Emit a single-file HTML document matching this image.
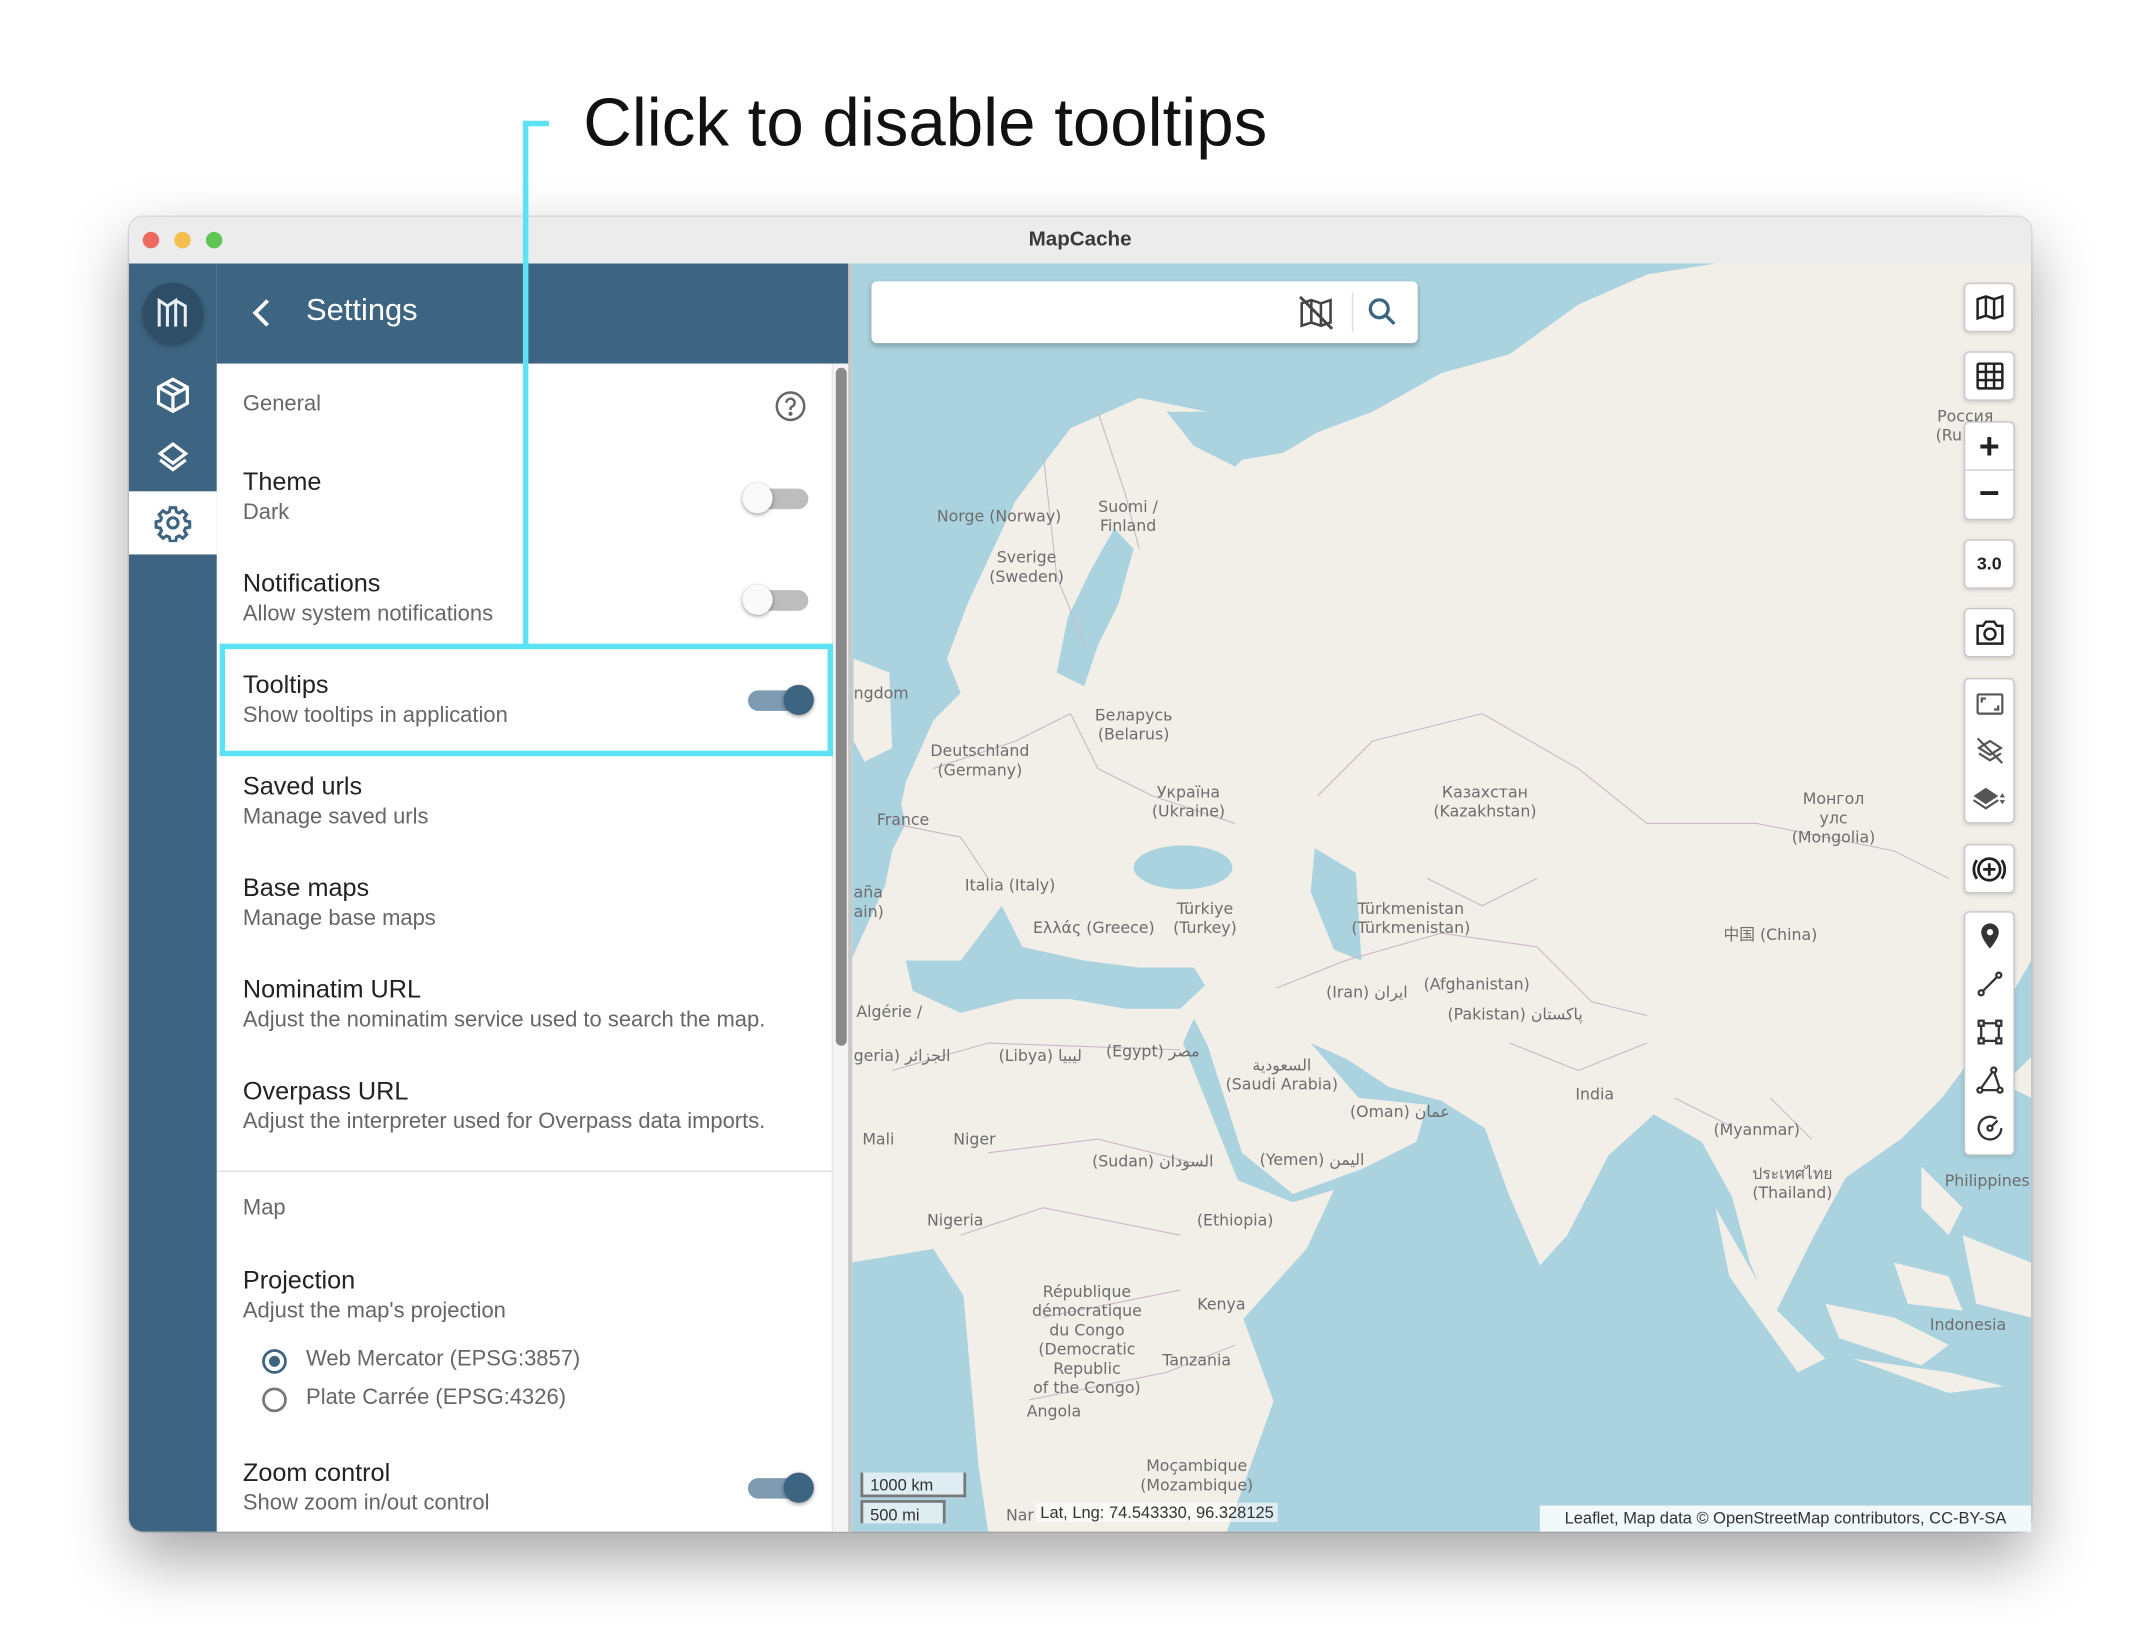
<!DOCTYPE html>
<html><head><meta charset="utf-8">
<style>
html,body{margin:0;padding:0;background:#fff;}
body{width:2152px;height:1630px;overflow:hidden;position:relative;font-family:"Liberation Sans",Arial,sans-serif;}
#s{position:absolute;left:0;top:0;width:1568px;height:1188px;transform:scale(1.3724);transform-origin:0 0;}
.a{position:absolute;}
.t1{position:absolute;left:177px;font-size:18.4px;color:#222;}
.t2{position:absolute;left:177px;font-size:16px;color:#666;}
.tg{position:absolute;width:44px;height:15px;border-radius:8px;background:#bdbdbd;}
.tg i{position:absolute;top:-4px;width:22px;height:22px;border-radius:50%;background:#fafafa;box-shadow:0 1px 3px rgba(0,0,0,.4);left:-4px;}
.tg.on{background:#7f9bb1;}
.tg.on i{left:26px;background:#3d6480;}
.btn{position:absolute;left:1431px;width:35px;background:#fff;border:1px solid #c8c8c8;border-radius:4px;box-shadow:0 1px 3px rgba(0,0,0,.15);}
</style></head><body>
<div id="s">
<div class="a" style="left:425px;top:60px;font-size:49px;color:#111;line-height:60px;">Click to disable tooltips</div>

<div class="a" style="left:94px;top:158px;width:1386px;height:958px;border-radius:10px;box-shadow:0 20px 45px rgba(0,0,0,.35),0 0 0 1px rgba(0,0,0,.12);overflow:hidden;background:#fff;">
  <div class="a" style="left:0;top:0;width:1386px;height:34px;background:#ececec;border-bottom:1px solid #d6d6d6;"></div>
  <div class="a" style="left:10px;top:11px;width:12px;height:12px;border-radius:50%;background:#ed6a5e;"></div>
  <div class="a" style="left:33px;top:11px;width:12px;height:12px;border-radius:50%;background:#f5bf4f;"></div>
  <div class="a" style="left:56px;top:11px;width:12px;height:12px;border-radius:50%;background:#61c554;"></div>
  <div class="a" style="left:0;top:8px;width:1386px;text-align:center;font-size:15px;font-weight:bold;color:#3a3a3a;">MapCache</div>
</div>

<svg class="a" style="left:620px;top:192px;" width="860" height="924" viewBox="620 192 860 924">
<rect x="620" y="192" width="860" height="924" fill="#aad3df"/>
<path fill="#f2efe9" d="M620,700 L645,645 L660,570 L680,525 L700,505 L690,480 L705,440 L740,365 L780,312 L830,290 L880,300 L905,335 L935,330 L960,315 L1000,300 L1050,272 L1100,258 L1150,222 L1200,200 L1250,192 L1480,192 L1480,700 L1445,760 L1415,800 L1385,830 L1345,858 L1322,900 L1292,960 L1275,920 L1262,872 L1240,832 L1205,812 L1172,842 L1142,900 L1122,922 L1100,872 L1082,822 L1050,802 L1012,792 L982,772 L955,760 L990,800 L1040,805 L1032,832 L992,852 L942,870 L905,840 L880,762 L870,742 L862,760 L902,860 L942,876 L972,867 L952,910 L906,961 L928,1021 L894,1116 L720,1116 L713,1068 L702,944 L680,910 L620,920 Z"/>
<path fill="#aad3df" d="M770,490 L778,450 L795,415 L812,385 L826,400 L815,440 L800,470 L790,500 Z"/>
<path fill="#aad3df" d="M660,700 L700,700 L730,660 L745,690 L790,700 L830,705 L870,705 L878,718 L860,735 L820,735 L780,728 L740,728 L700,738 L665,722 Z"/>
<ellipse cx="862" cy="632" rx="36" ry="16" fill="#aad3df"/>
<path fill="#aad3df" d="M958,618 L988,636 L992,700 L972,692 L955,650 Z"/>
<path fill="#aad3df" d="M620,560 L650,560 L660,600 L640,640 L620,640 Z"/>
<path fill="#f2efe9" d="M622,480 L648,490 L650,545 L630,555 L622,540 Z"/>
<path fill="#aad3df" d="M850,300 L900,300 L920,320 L900,340 L870,325 Z"/>
<path fill="#f2efe9" d="M1250,880 L1290,950 L1330,990 L1310,1000 L1260,930 Z M1330,950 L1380,960 L1420,980 L1400,995 L1340,975 Z M1350,990 L1420,1000 L1460,1010 L1420,1015 Z M1400,850 L1430,880 L1420,900 L1400,880 Z M1380,920 L1420,930 L1430,955 L1390,950 Z M1430,900 L1480,920 L1480,960 L1440,950 Z M1460,790 L1480,770 L1480,800 Z"/>
<g fill="none" stroke="#c9b8c8" stroke-width="0.8">
<path d="M760,330 L770,420 L790,470 M800,300 L820,360 L830,400 M680,560 L740,540 L780,520 L800,560 L840,580 L900,600 M650,600 L700,610 L720,640 M930,720 L980,700 L1050,680 L1120,690 L1160,730 L1200,740 M960,580 L1000,540 L1080,520 L1150,560 L1200,600 L1280,600 L1380,620 L1420,640 M1040,640 L1080,660 L1120,640 M1100,760 L1150,780 L1200,760 M650,780 L720,760 L860,765 M720,840 L800,830 L880,850 M700,900 L760,880 L860,900 M760,960 L860,940 M750,1020 L850,1000 L900,980 M1290,800 L1320,830 M1220,800 L1260,820"/>
</g>
<g font-family="DejaVu Sans,Liberation Sans,sans-serif" font-size="11.5" fill="#6d6d6d" text-anchor="middle">
<text x="728" y="380">Norge (Norway)</text>
<text x="822" y="373">Suomi /</text><text x="822" y="387">Finland</text>
<text x="748" y="410">Sverige</text><text x="748" y="424">(Sweden)</text>
<text x="622" y="509" text-anchor="start">ngdom</text>
<text x="826" y="525">Беларусь</text><text x="826" y="539">(Belarus)</text>
<text x="714" y="551">Deutschland</text><text x="714" y="565">(Germany)</text>
<text x="866" y="581">Україна</text><text x="866" y="595">(Ukraine)</text>
<text x="658" y="601">France</text>
<text x="1082" y="581">Казахстан</text><text x="1082" y="595">(Kazakhstan)</text>
<text x="1336" y="586">Монгол</text><text x="1336" y="600">улс</text><text x="1336" y="614">(Mongolia)</text>
<text x="736" y="649">Italia (Italy)</text>
<text x="878" y="666">Türkiye</text><text x="878" y="680">(Turkey)</text>
<text x="797" y="680">Ελλάς (Greece)</text>
<text x="1028" y="666">Türkmenistan</text><text x="1028" y="680">(Türkmenistan)</text>
<text x="622" y="654" text-anchor="start">aña</text><text x="622" y="668" text-anchor="start">ain)</text>
<text x="1290" y="685">中国 (China)</text>
<text x="1076" y="721">(Afghanistan)</text>
<text x="996" y="727">(Iran) ايران</text>
<text x="1104" y="743">(Pakistan) پاکستان</text>
<text x="624" y="741" text-anchor="start">Algérie /</text>
<text x="622" y="773" text-anchor="start">geria) الجزائر</text>
<text x="758" y="773">(Libya) ليبيا</text>
<text x="840" y="770">(Egypt) مصر</text>
<text x="934" y="780">السعودية</text><text x="934" y="794">(Saudi Arabia)</text>
<text x="1162" y="801">India</text>
<text x="1020" y="814">(Oman) عمان</text>
<text x="1280" y="827">(Myanmar)</text>
<text x="640" y="834">Mali</text>
<text x="710" y="834">Niger</text>
<text x="840" y="850">(Sudan) السودان</text>
<text x="956" y="849">(Yemen) اليمن</text>
<text x="1448" y="864">Philippines</text>
<text x="1306" y="859">ประเทศไทย</text><text x="1306" y="873">(Thailand)</text>
<text x="696" y="893">Nigeria</text>
<text x="900" y="893">(Ethiopia)</text>
<text x="792" y="945">République</text><text x="792" y="959">démocratique</text><text x="792" y="973">du Congo</text><text x="792" y="987">(Democratic</text><text x="792" y="1001">Republic</text><text x="792" y="1015">of the Congo)</text>
<text x="890" y="954">Kenya</text>
<text x="872" y="995">Tanzania</text>
<text x="1434" y="969">Indonesia</text>
<text x="768" y="1032">Angola</text>
<text x="872" y="1072">Moçambique</text><text x="872" y="1086">(Mozambique)</text>
<text x="1432" y="307">Россия</text><text x="1420" y="321">(Ru</text>
<text x="733" y="1108" text-anchor="start">Nar</text>
</g>
</svg>

<div class="a" style="left:627px;top:1073px;border:2px solid #777;border-top:none;background:rgba(255,255,255,.6);font-size:12px;color:#333;padding-left:5px;line-height:18px;box-sizing:border-box;width:77px;height:18px;">1000 km</div>
<div class="a" style="left:627px;top:1093px;width:62px;height:17px;border:2px solid #777;border-bottom:none;background:rgba(255,255,255,.6);font-size:12px;color:#333;padding-left:5px;line-height:18px;box-sizing:border-box;">500 mi</div>
<div class="a" style="left:755px;top:1095px;font-size:12px;color:#333;background:rgba(255,255,255,.6);padding:0 3px;">Lat, Lng: 74.543330, 96.328125</div>
<div class="a" style="left:1122px;top:1097px;width:358px;height:19px;background:rgba(255,255,255,.85);font-size:12px;color:#333;line-height:19px;text-align:center;">Leaflet, Map data © OpenStreetMap contributors, CC-BY-SA</div>

<div class="a" style="left:635px;top:205px;width:398px;height:45px;background:#fff;border-radius:4px;box-shadow:0 2px 4px rgba(0,0,0,.25);"></div>
<svg class="a" style="left:945px;top:214px" width="28" height="28" viewBox="0 0 24 24" fill="none" stroke="#444" stroke-width="1.6"><path d="M3 6l6-2 6 2 6-2v14l-6 2-6-2-6 2z M9 4v14 M15 6v14"/><path d="M2 2l20 20" stroke-width="1.8"/></svg>
<div class="a" style="left:985px;top:213px;width:1px;height:29px;background:#ddd;"></div>
<svg class="a" style="left:995px;top:215px" width="24" height="24" viewBox="0 0 24 24" fill="none" stroke="#3d6480" stroke-width="2.4"><circle cx="10" cy="10" r="6.5"/><path d="M15 15l6 6"/></svg>

<div class="btn" style="top:206px;height:34px;"><svg style="position:absolute;left:6px;top:5px" width="24" height="24" viewBox="0 0 24 24" fill="none" stroke="#222" stroke-width="1.8"><path d="M3 6l6-2 6 2 6-2v14l-6 2-6-2-6 2z M9 4v14 M15 6v14"/></svg></div>
<div class="btn" style="top:256px;height:34px;"><svg style="position:absolute;left:6px;top:5px" width="24" height="24" viewBox="0 0 24 24" fill="none" stroke="#222" stroke-width="1.8"><rect x="3" y="3" width="18" height="18" rx="1"/><path d="M3 9h18M3 15h18M9 3v18M15 3v18"/></svg></div>
<div class="btn" style="top:307px;height:70px;"><div style="position:absolute;left:0;top:34px;width:35px;height:1px;background:#ccc"></div><div style="position:absolute;left:0;top:0;width:35px;text-align:center;font-size:26px;line-height:34px;font-weight:bold;color:#222">+</div><div style="position:absolute;left:0;top:35px;width:35px;text-align:center;font-size:26px;line-height:32px;font-weight:bold;color:#222">−</div></div>
<div class="btn" style="top:393px;height:34px;text-align:center;font-size:13px;font-weight:bold;line-height:34px;color:#222">3.0</div>
<div class="btn" style="top:443px;height:34px;"><svg style="position:absolute;left:6px;top:5px" width="24" height="24" viewBox="0 0 24 24" fill="none" stroke="#222" stroke-width="1.8"><path d="M3 7h4l2-3h6l2 3h4v13H3z"/><circle cx="12" cy="13" r="4"/></svg></div>
<div class="btn" style="top:494px;height:104px;">
<svg style="position:absolute;left:6px;top:6px" width="24" height="24" viewBox="0 0 24 24" fill="none" stroke="#555" stroke-width="1.6"><rect x="3" y="5" width="18" height="14" rx="1"/><path d="M6 11V8h3M18 13v3h-3"/></svg>
<svg style="position:absolute;left:6px;top:40px" width="24" height="24" viewBox="0 0 24 24" fill="none" stroke="#555" stroke-width="1.6"><path d="M4 10l8-5 8 5-8 5z M4 14l8 5 8-5 M3 3l18 18"/></svg>
<svg style="position:absolute;left:4px;top:75px" width="28" height="24" viewBox="0 0 28 24" fill="#555"><path d="M2 10l9-6 9 6-9 6z"/><path d="M2 13l9 6 9-6" fill="none" stroke="#555" stroke-width="1.6"/><path d="M23 8l2 3h-4zM23 16l2-3h-4z"/></svg>
</div>
<div class="btn" style="top:615px;height:34px;"><svg style="position:absolute;left:4px;top:4px" width="27" height="27" viewBox="0 0 24 24" fill="none" stroke="#222" stroke-width="1.8"><circle cx="12" cy="12" r="7"/><path d="M12 8v8M8 12h8M4 6a10 10 0 0 0 0 12M20 6a10 10 0 0 1 0 12"/></svg></div>
<div class="btn" style="top:664px;height:176px;">
<svg style="position:absolute;left:7px;top:6px" width="22" height="22" viewBox="0 0 24 24" fill="#333"><path d="M12 2a7 7 0 0 0-7 7c0 5 7 13 7 13s7-8 7-13a7 7 0 0 0-7-7zm0 9.5a2.5 2.5 0 1 1 0-5 2.5 2.5 0 0 1 0 5z"/></svg>
<svg style="position:absolute;left:7px;top:41px" width="22" height="22" viewBox="0 0 24 24" fill="none" stroke="#333" stroke-width="1.8"><circle cx="5" cy="19" r="2"/><circle cx="19" cy="5" r="2"/><path d="M6.5 17.5l11-11"/></svg>
<svg style="position:absolute;left:7px;top:76px" width="22" height="22" viewBox="0 0 24 24" fill="none" stroke="#333" stroke-width="1.8"><rect x="3" y="3" width="4" height="4"/><rect x="17" y="3" width="4" height="4"/><rect x="3" y="17" width="4" height="4"/><rect x="17" y="17" width="4" height="4"/><path d="M7 5h10M7 19h10M5 7v10M19 7v10"/></svg>
<svg style="position:absolute;left:7px;top:111px" width="22" height="22" viewBox="0 0 24 24" fill="none" stroke="#333" stroke-width="1.8"><circle cx="4" cy="20" r="2"/><circle cx="20" cy="20" r="2"/><circle cx="15" cy="4" r="2"/><path d="M6 20h12M5 18.5l9-13M15.5 6l4 12"/></svg>
<svg style="position:absolute;left:7px;top:146px" width="22" height="22" viewBox="0 0 24 24" fill="none" stroke="#333" stroke-width="1.8"><path d="M17 4.5A9 9 0 1 0 21 12"/><circle cx="12" cy="12" r="2"/><path d="M13.5 10.5L18 6"/></svg>
</div>

<div class="a" style="left:94px;top:192px;width:64px;height:924px;background:#3d6480;border-bottom-left-radius:10px;"></div>
<div class="a" style="left:104px;top:206px;width:44px;height:44px;border-radius:50%;background:#2e4d66;box-shadow:0 2px 4px rgba(0,0,0,.3);"></div>
<svg class="a" style="left:110px;top:212px" width="32" height="32" viewBox="0 0 32 32" fill="none" stroke="#e8eef3" stroke-width="2.2"><path d="M6 26V7l6 4 6-4v19M12 11v15M18 7l7 4v15"/></svg>
<svg class="a" style="left:112px;top:274px" width="28" height="28" viewBox="0 0 24 24" fill="none" stroke="#fff" stroke-width="2"><path d="M12 2l9 5v10l-9 5-9-5V7z M3 7l9 5 9-5 M12 12v10 M7.5 4.5l9 5"/></svg>
<svg class="a" style="left:112px;top:320px" width="28" height="28" viewBox="0 0 24 24" fill="none" stroke="#fff" stroke-width="2"><path d="M12 3l8 6-8 6-8-6z M4 13l8 6 8-6"/></svg>
<div class="a" style="left:94px;top:358px;width:64px;height:46px;background:#fff;"></div>
<svg class="a" style="left:112px;top:367px" width="28" height="28" viewBox="0 0 24 24" fill="none" stroke="#3d6480" stroke-width="1.9"><circle cx="12" cy="12" r="3.2"/><path d="M10.3 2.5h3.4l.5 2.6 1.8.8 2.2-1.5 2.4 2.4-1.5 2.2.8 1.8 2.6.5v3.4l-2.6.5-.8 1.8 1.5 2.2-2.4 2.4-2.2-1.5-1.8.8-.5 2.6h-3.4l-.5-2.6-1.8-.8-2.2 1.5-2.4-2.4 1.5-2.2-.8-1.8-2.6-.5v-3.4l2.6-.5.8-1.8-1.5-2.2 2.4-2.4 2.2 1.5 1.8-.8z"/></svg>

<div class="a" style="left:158px;top:192px;width:462px;height:73px;background:#3d6480;"></div>
<svg class="a" style="left:180px;top:216px" width="22" height="24" viewBox="0 0 22 24" fill="none" stroke="#fff" stroke-width="2.8"><path d="M15 3L6 12l9 9"/></svg>
<div class="a" style="left:223px;top:213px;font-size:22.5px;color:#fff;">Settings</div>

<div class="a" style="left:158px;top:265px;width:462px;height:851px;background:#fff;"></div>
<div class="a" style="left:606px;top:265px;width:14px;height:851px;background:#f4f4f4;border-left:1px solid #e6e6e6;"></div>
<div class="a" style="left:609px;top:268px;width:8px;height:494px;background:#8a8a8a;border-radius:4px;"></div>
<div class="a" style="left:618px;top:192px;width:3px;height:924px;background:#c8c8c8;"></div>

<div class="t2" style="top:286px;">General</div>
<svg class="a" style="left:564px;top:284px" width="24" height="24" viewBox="0 0 24 24" fill="none" stroke="#666" stroke-width="1.8"><circle cx="12" cy="12" r="10"/><path d="M9 9.5a3 3 0 1 1 4 2.8c-.8.4-1 1-1 1.9v.6"/><circle cx="12" cy="17.5" r=".6" fill="#666"/></svg>

<div class="t1" style="top:340px;">Theme</div><div class="t2" style="top:365px;">Dark</div>
<div class="tg" style="left:545px;top:356px;"><i></i></div>
<div class="t1" style="top:414px;">Notifications</div><div class="t2" style="top:439px;">Allow system notifications</div>
<div class="tg" style="left:545px;top:430px;"><i></i></div>
<div class="t1" style="top:488px;">Tooltips</div><div class="t2" style="top:513px;">Show tooltips in application</div>
<div class="tg on" style="left:545px;top:503px;"><i></i></div>
<div class="t1" style="top:562px;">Saved urls</div><div class="t2" style="top:587px;">Manage saved urls</div>
<div class="t1" style="top:636px;">Base maps</div><div class="t2" style="top:661px;">Manage base maps</div>
<div class="t1" style="top:710px;">Nominatim URL</div><div class="t2" style="top:735px;">Adjust the nominatim service used to search the map.</div>
<div class="t1" style="top:784px;">Overpass URL</div><div class="t2" style="top:809px;">Adjust the interpreter used for Overpass data imports.</div>
<div class="a" style="left:158px;top:853px;width:448px;height:1px;background:#e0e0e0;"></div>
<div class="t2" style="top:872px;">Map</div>
<div class="t1" style="top:922px;">Projection</div><div class="t2" style="top:947px;">Adjust the map's projection</div>
<div class="a" style="left:191px;top:983px;width:14px;height:14px;border:2px solid #3d6480;border-radius:50%;"></div>
<div class="a" style="left:196px;top:988px;width:8px;height:8px;background:#3d6480;border-radius:50%;"></div>
<div class="t2" style="left:223px;top:982px;">Web Mercator (EPSG:3857)</div>
<div class="a" style="left:191px;top:1011px;width:14px;height:14px;border:2px solid #777;border-radius:50%;"></div>
<div class="t2" style="left:223px;top:1010px;">Plate Carrée (EPSG:4326)</div>
<div class="t1" style="top:1062px;">Zoom control</div><div class="t2" style="top:1087px;">Show zoom in/out control</div>
<div class="tg on" style="left:545px;top:1077px;"><i></i></div>

<div class="a" style="left:160px;top:469px;width:447px;height:82px;border:4px solid #5ce3f3;box-sizing:border-box;"></div>
<div class="a" style="left:381px;top:88px;width:4px;height:382px;background:#5ce3f3;"></div>
<div class="a" style="left:381px;top:88px;width:19px;height:4px;background:#5ce3f3;"></div>
</div>
</body></html>
